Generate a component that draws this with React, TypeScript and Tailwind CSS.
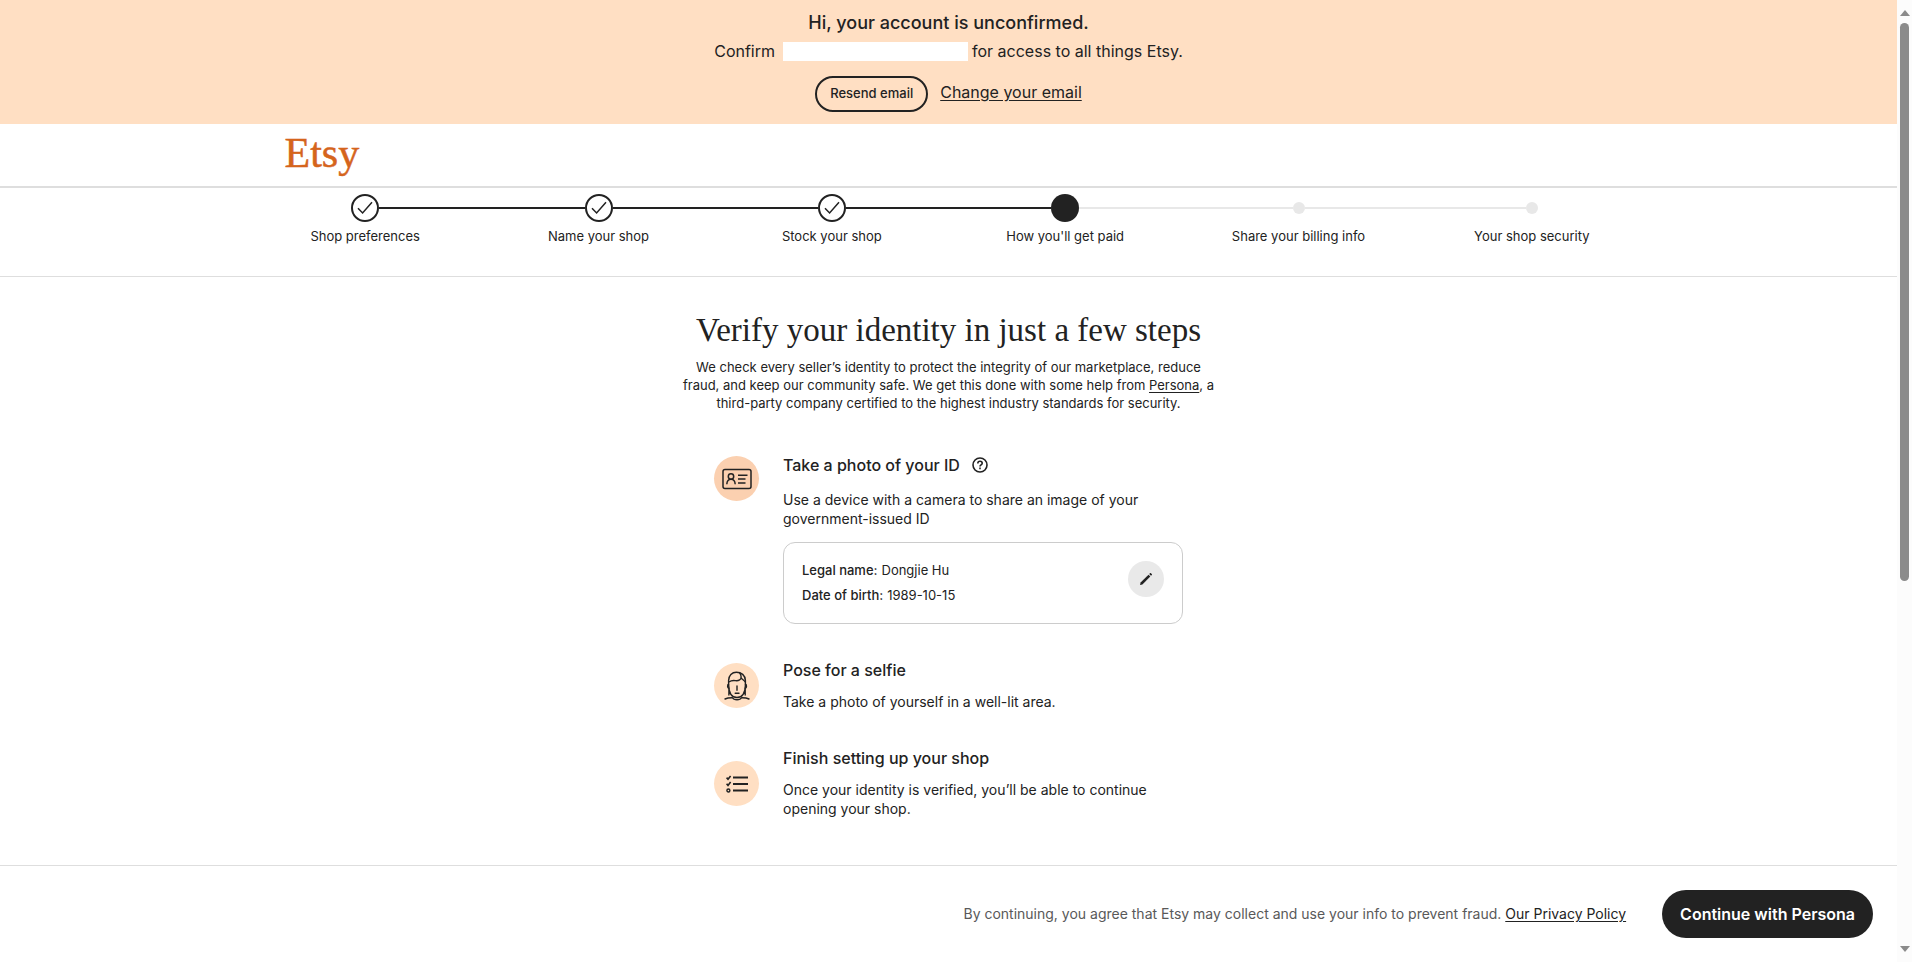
import React from "react";

type StepState = "done" | "current" | "todo";

const steps: { label: string; state: StepState }[] = [
  { label: "Shop preferences", state: "done" },
  { label: "Name your shop", state: "done" },
  { label: "Stock your shop", state: "done" },
  { label: "How you'll get paid", state: "current" },
  { label: "Share your billing info", state: "todo" },
  { label: "Your shop security", state: "todo" },
];

function StepMarker({ state }: { state: StepState }) {
  if (state === "done") {
    return (
      <span className="flex size-7 shrink-0 items-center justify-center rounded-full border-2 border-[#222] bg-white">
        <svg viewBox="0 0 16 16" className="size-4" fill="none" stroke="#222" strokeWidth="1.5" aria-hidden="true">
          <path d="M1 8.2 5.6 13 15 2.2" />
        </svg>
      </span>
    );
  }
  if (state === "current") {
    return <span className="size-7 shrink-0 rounded-full bg-[#222]" />;
  }
  return <span className="size-3 shrink-0 rounded-full bg-[#e8e8e8]" />;
}

function lineColor(index: number, side: "left" | "right") {
  const edge = side === "left" ? index : index + 1;
  if (edge === 0 || edge === steps.length) return "bg-transparent";
  return steps[edge].state === "todo" ? "bg-[#e8e8e8]" : "bg-[#222]";
}

function Stepper() {
  return (
    <nav aria-label="Shop setup progress" className="border-b border-[#dedede] pt-1.5 pb-[30px]">
      <ol className="mx-auto grid max-w-[1400px] grid-cols-6">
        {steps.map((step, i) => (
          <li key={step.label} className="flex flex-col items-center gap-1">
            <div className="flex h-7 w-full items-center">
              <span className={`h-0.5 flex-1 ${lineColor(i, "left")}`} />
              <StepMarker state={step.state} />
              <span className={`h-0.5 flex-1 ${lineColor(i, "right")}`} />
            </div>
            <span className="text-[13px] leading-5">{step.label}</span>
          </li>
        ))}
      </ol>
    </nav>
  );
}

function IdCardIcon() {
  return (
    <svg viewBox="0 0 30 22" className="h-[22px] w-[30px]" fill="none" stroke="#222" strokeWidth="1.5" aria-hidden="true">
      <rect x="1" y="1.5" width="28" height="19" rx="2" />
      <circle cx="9" cy="8.5" r="2.7" />
      <path d="M4.8 16.2c.2-3 1.8-4.9 4.2-4.9s4 1.9 4.2 4.9M16 7.2h9.5M16 11h7.5M16 15h7.5" />
    </svg>
  );
}

function FaceIcon() {
  return (
    <svg viewBox="0 0 26 30" className="h-[30px] w-[26px]" fill="none" stroke="#222" strokeWidth="1.4" strokeLinecap="round" strokeLinejoin="round" aria-hidden="true">
      <path d="M4.6 14V9.500C4.600 4.500 8 1.200 12.400 1.200c4.800 0 9 3.100 9 8.300V14" />
      <path d="M4.800 11c2.400-1.600 4.200-1.800 6.600-1.400 3.300.5 6-1.100 5.700-3.800-.1-1.500-.6-2.700-1.300-3.500M17 6.500c.8 1.900 2.600 2.200 4.200 4.300" />
      <path d="M4.600 13.300c-1.200.2-1.500 3.600.2 4M21.500 13.300c1.200.2 1.500 3.600-.2 4" />
      <path d="M4.700 14.500c.2 7.500 3.200 12 8.300 12s8.100-4.500 8.400-12M4.900 17.500V24M21.200 17.500V24" />
      <path d="M1 28c2.700-1.300 5-1.200 7.500-1.200 1.300 2.600 7.700 2.600 9 0 2.500 0 4.800-.1 7.500 1.200" />
      <path d="M13 15v4.200M11.200 22.200h3.800" />
    </svg>
  );
}

function ChecklistIcon() {
  return (
    <svg viewBox="0 0 22 18" className="h-[18px] w-[22px]" fill="none" stroke="#222" strokeWidth="1.8" aria-hidden="true">
      <path d="M7 2.500h15M7 9h15M7 15.500h15" />
      <path d="M.6 2.600 2 4.200 4.600.900M.6 8.800 2 10.400l2.600-3.300" strokeWidth="1.6" />
      <circle cx="2.400" cy="15.500" r="1.500" strokeWidth="1.4" />
    </svg>
  );
}

function HelpIcon() {
  return (
    <svg viewBox="0 0 16 16" className="size-4" fill="none" stroke="#222" strokeWidth="1.6" aria-hidden="true">
      <circle cx="8" cy="8" r="7" />
      <path d="M5.800 6.400C5.800 5 6.700 4.200 8 4.200s2.200.8 2.200 2c0 1.600-2.200 1.700-2.200 3.300" />
      <path d="M8 10.600v1.700" />
    </svg>
  );
}

function PencilIcon() {
  return (
    <svg viewBox="0 0 14 14" className="size-3.5" fill="#222" aria-hidden="true">
      <path d="M1 13l.6-2.400L9.500 2.700l1.800 1.800L3.400 12.400z" />
      <path d="M10.200 2l.8-.8c.3-.3.600-.3.900 0l.9.9c.3.3.3.600 0 .9l-.8.800z" />
    </svg>
  );
}

function Badge({ className, children }: { className: string; children: React.ReactNode }) {
  return (
    <span className={`flex size-[45px] shrink-0 items-center justify-center rounded-full ${className}`}>{children}</span>
  );
}

function Scrollbar() {
  return (
    <div aria-hidden="true" className="sticky top-0 flex h-screen w-[15px] shrink-0 flex-col items-center bg-[#fcfcfc] py-2.5">
      <svg viewBox="0 0 10 6" className="h-1.5 w-2.5" fill="#8b8b8b">
        <path d="M5 0l5 6H0z" />
      </svg>
      <div className="flex w-full flex-1 flex-col items-center pt-[7px] pb-2">
        <span className="h-[61%] w-[9px] rounded-full bg-[#8b8b8b]" />
      </div>
      <svg viewBox="0 0 10 6" className="h-1.5 w-2.5" fill="#8b8b8b">
        <path d="M5 6L0 0h10z" />
      </svg>
    </div>
  );
}

export default function App() {
  return (
    <div className="flex bg-white font-['Inter','Liberation_Sans',sans-serif] text-[#222]">
      <div className="flex min-h-screen min-w-0 flex-1 flex-col">
        <section className="flex flex-col items-center bg-[#ffdfc3] pt-[11px] pb-3">
          <h2 className="text-lg leading-6 font-medium">Hi, your account is unconfirmed.</h2>
          <p className="mt-1 flex items-center leading-6">
            Confirm
            <span className="mr-1 ml-2 h-[19px] w-[185px] bg-white" />
            for access to all things Etsy.
          </p>
          <div className="mt-[13px] flex items-start gap-3">
            <button type="button" className="h-9 rounded-full border-2 border-[#222] px-[13px] text-[13px] font-medium">
              Resend email
            </button>
            <a href="#change-email" className="pt-1 leading-6 underline underline-offset-2">
              Change your email
            </a>
          </div>
        </section>

        <header className="border-b-2 border-[#dedede]">
          <div className="mx-auto flex h-[62px] max-w-[1400px] items-center px-9 pb-1">
            <a
              href="#home"
              className="font-['Liberation_Serif',serif] text-[42px] leading-none text-[#d5641c] [-webkit-text-stroke:0.5px_#d5641c]"
            >
              Etsy
            </a>
          </div>
        </header>

        <Stepper />

        <main className="flex flex-col items-center pt-8 pb-10">
          <h1 className="font-['Liberation_Serif',serif] text-[33px] leading-[42px]">
            Verify your identity in just a few steps
          </h1>
          <p className="mt-[7px] max-w-[542px] text-center text-[13px] leading-[18px]">
            We check every seller’s identity to protect the integrity of our marketplace, reduce fraud, and keep our
            community safe. We get this done with some help from{" "}
            <a href="#persona" className="underline underline-offset-2">
              Persona
            </a>
            , a third-party company certified to the highest industry standards for security.
          </p>

          <ul className="mt-[41px] flex w-[469px] max-w-full flex-col">
            <li className="flex gap-6">
              <div className="pt-[3px]">
                <Badge className="bg-[#fbd0b0]">
                  <IdCardIcon />
                </Badge>
              </div>
              <div className="flex-1">
                <div className="flex items-center gap-3">
                  <h3 className="leading-6 font-medium">Take a photo of your ID</h3>
                  <button type="button" aria-label="More about ID photos">
                    <HelpIcon />
                  </button>
                </div>
                <p className="mt-[13px] max-w-[375px] text-sm leading-[19px]">
                  Use a device with a camera to share an image of your government-issued ID
                </p>
                <div className="mt-3.5 flex items-start justify-between rounded-xl border border-[#ccc] px-[18px] py-[15px]">
                  <dl className="text-[13px] leading-[25px]">
                    <div className="flex gap-1">
                      <dt className="font-medium">Legal name:</dt>
                      <dd>Dongjie Hu</dd>
                    </div>
                    <div className="flex gap-1">
                      <dt className="font-medium">Date of birth:</dt>
                      <dd>1989-10-15</dd>
                    </div>
                  </dl>
                  <button
                    type="button"
                    aria-label="Edit details"
                    className="mt-[3px] flex size-9 items-center justify-center rounded-full bg-[#e9e9e9]"
                  >
                    <PencilIcon />
                  </button>
                </div>
              </div>
            </li>
            <li className="mt-[34px] flex items-start gap-6">
              <div className="pt-[5px]">
                <Badge className="bg-[#ffdfc3]">
                  <FaceIcon />
                </Badge>
              </div>
              <div className="flex-1">
                <h3 className="leading-6 font-medium">Pose for a selfie</h3>
                <p className="mt-2.5 text-sm leading-[19px]">Take a photo of yourself in a well-lit area.</p>
              </div>
            </li>
            <li className="mt-[35px] flex items-start gap-6">
              <div className="pt-[15px]">
                <Badge className="bg-[#ffdfc3]">
                  <ChecklistIcon />
                </Badge>
              </div>
              <div className="flex-1">
                <h3 className="leading-6 font-medium">Finish setting up your shop</h3>
                <p className="mt-2.5 max-w-[375px] text-sm leading-[19px]">
                  Once your identity is verified, you’ll be able to continue opening your shop.
                </p>
              </div>
            </li>
          </ul>
        </main>

        <footer className="mt-auto flex items-center justify-end gap-9 border-t border-[#dedede] px-6 py-6">
          <p className="text-sm text-[#595959]">
            By continuing, you agree that Etsy may collect and use your info to prevent fraud.{" "}
            <a href="#privacy" className="text-[#222] underline underline-offset-2">
              Our Privacy Policy
            </a>
          </p>
          <button type="button" className="h-12 rounded-full bg-[#222] px-[18px] font-semibold text-white">
            Continue with Persona
          </button>
        </footer>
      </div>
      <Scrollbar />
    </div>
  );
}
